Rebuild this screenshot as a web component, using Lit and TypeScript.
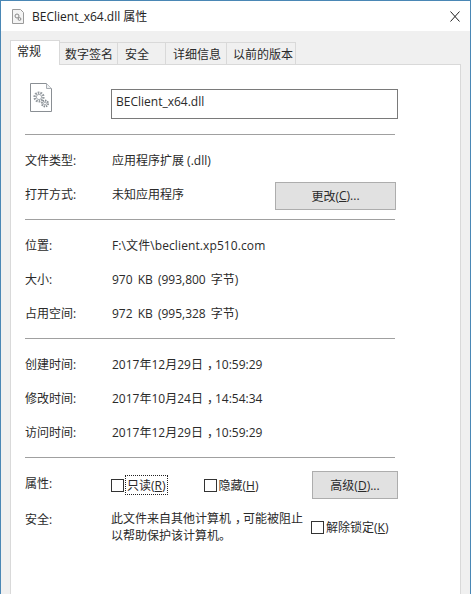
import { LitElement, html, css } from 'lit';
import { customElement } from 'lit/decorators.js';

const TABS = [
  { label: '常规', width: 50, pad: 6 },
  { label: '数字签名', width: 59, pad: 5 },
  { label: '安全', width: 49, pad: 7 },
  { label: '详细信息', width: 62, pad: 7 },
  { label: '以前的版本', width: 70, pad: 6 },
];

@customElement('app-root')
export class AppRoot extends LitElement {
  static styles = css`
    :host {
      display: block;
      width: 471px;
      height: 594px;
      overflow: hidden;
      font-family: 'Open Sans', 'Noto Sans CJK SC', sans-serif;
      font-size: 12px;
      color: #2a2a2a;
    }

    .window {
      display: flex;
      flex-direction: column;
      box-sizing: border-box;
      height: 594px;
      border: 1px solid #4a87b5;
      border-bottom: none;
      background: #f0f0f0;
    }

    .titlebar {
      display: flex;
      align-items: center;
      flex: none;
      height: 30px;
      padding: 0 10px 0 11px;
      background: #fff;
    }

    .titlebar .title {
      flex: 1;
      margin-left: 8px;
      color: #222;
    }

    .tabs {
      display: flex;
      align-items: flex-end;
      flex: none;
      height: 33px;
      padding-left: 9px;
    }

    .tab {
      display: flex;
      align-items: center;
      box-sizing: border-box;
      height: 22px;
      margin-left: -1px;
      border: 1px solid #d9d9d9;
      border-bottom: none;
      background: #f0f0f0;
    }

    .tab.active {
      height: 25px;
      margin-left: 0;
      padding-bottom: 4px;
      margin-bottom: -1px;
      background: #fff;
      position: relative;
      z-index: 1;
    }

    .panel {
      flex: 1;
      box-sizing: border-box;
      width: 451px;
      margin-left: 9px;
      padding: 18px 62px 0 14px;
      border: 1px solid #d9d9d9;
      border-bottom: none;
      background: #fff;
    }

    .head {
      display: flex;
      align-items: flex-start;
      height: 35px;
    }

    .file-icon {
      margin-left: 5px;
      width: 22px;
      height: 29px;
    }

    .name {
      box-sizing: border-box;
      width: 287px;
      height: 30px;
      margin: 6px 0 0 59px;
      padding: 0 0 5px 4px;
      display: flex;
      align-items: center;
      border: 1px solid #7a7a7a;
    }

    .sep {
      width: 370px;
      height: 1px;
      background: #a0a0a0;
    }

    .group {
      padding: 8px 0;
    }

    .head + .sep {
      margin-top: 16px;
    }

    .row {
      display: flex;
      align-items: center;
      height: 34px;
    }

    .label {
      flex: none;
      width: 87px;
    }

    .value {
      flex: 1;
    }

    .path {
      letter-spacing: 0.1px;
    }

    .size {
      word-spacing: 2px;
    }

    .comma {
      padding-left: 4px;
      letter-spacing: -4px;
    }

    .btn {
      display: flex;
      align-items: center;
      justify-content: center;
      box-sizing: border-box;
      flex: none;
      height: 28px;
      border: 1px solid #adadad;
      background: #e1e1e1;
    }

    .btn u,
    .check u {
      text-underline-offset: 1px;
    }

    .btn-change {
      width: 121px;
      margin: 3px 2px 0 0;
    }

    .attrs {
      display: flex;
      align-items: center;
      height: 28px;
      margin-top: 13px;
    }

    .attrs .label {
      width: 86px;
      margin-top: -4px;
    }

    .check {
      display: flex;
      align-items: center;
      flex: none;
      gap: 2px;
    }

    .box {
      box-sizing: border-box;
      width: 13px;
      height: 13px;
      border: 1px solid #333;
      background: #fff;
    }

    .focus {
      padding: 0 1px;
      outline: 1px dotted #222;
      outline-offset: 0;
    }

    .check.hidden {
      margin-left: 37px;
    }

    .btn-advanced {
      width: 86px;
      margin-left: auto;
    }

    .security {
      display: flex;
      margin-top: 11px;
    }

    .security .label {
      width: 86px;
    }

    .note {
      flex: none;
      width: 200px;
      line-height: 17px;
    }

    .note div {
      white-space: nowrap;
    }

    .security .check {
      margin-top: 8px;
      align-self: flex-start;
    }
  `;

  private renderFileIcon() {
    return html`<svg class="file-icon" viewBox="0 0 22 29">
      <path d="M.5.5h16l5 5v23H.5z" fill="#fff" stroke="#8a8f94" />
      <path d="M16.5.5v5h5" fill="#eef0f2" stroke="#a8adb2" />
      <circle cx="9" cy="14" r="4.4" fill="none" stroke="#969ca1" stroke-width="2.4" stroke-dasharray="1.7 1" />
      <circle cx="9" cy="14" r="2.6" fill="none" stroke="#a9aeb3" />
      <circle cx="15" cy="20.5" r="3" fill="none" stroke="#868c91" stroke-width="2" stroke-dasharray="1.4 .9" />
      <circle cx="15" cy="20.5" r="1.4" fill="none" stroke="#a3a8ad" />
    </svg>`;
  }

  private renderRow(label: string, value: unknown) {
    return html`<div class="row">
      <div class="label">${label}</div>
      <div class="value">${value}</div>
    </div>`;
  }

  private renderDate(date: string, time: string) {
    return html`${date}<span class="comma">，</span>${time}`;
  }

  render() {
    return html`<div class="window">
      <div class="titlebar">
        <svg width="12" height="15" viewBox="0 0 12 15">
          <path d="M.5.5h8l3 3v11H.5z" fill="#f4f4f4" stroke="#9a9a9a" />
          <circle cx="5" cy="7" r="2" fill="none" stroke="#888" />
          <circle cx="7.5" cy="10" r="1.4" fill="none" stroke="#888" />
        </svg>
        <div class="title">BEClient_x64.dll 属性</div>
        <svg width="10" height="11" viewBox="0 0 10 11">
          <path d="M.5.5l9 10M9.5.5l-9 10" stroke="#222" fill="none" />
        </svg>
      </div>
      <div class="tabs">
        ${TABS.map(
          (t, i) => html`<div
            class="tab ${i === 0 ? 'active' : ''}"
            style="width: ${t.width}px; padding-left: ${t.pad}px"
          >
            ${t.label}
          </div>`
        )}
      </div>
      <div class="panel">
        <div class="head">
          ${this.renderFileIcon()}
          <div class="name">BEClient_x64.dll</div>
        </div>
        <div class="sep"></div>
        <div class="group">
          ${this.renderRow('文件类型:', '应用程序扩展 (.dll)')}
          <div class="row">
            <div class="label">打开方式:</div>
            <div class="value">未知应用程序</div>
            <div class="btn btn-change">更改(<u>C</u>)...</div>
          </div>
        </div>
        <div class="sep"></div>
        <div class="group">
          ${this.renderRow('位置:', html`<span class="path">F:\\文件\\beclient.xp510.com</span>`)}
          ${this.renderRow('大小:', html`<span class="size">970 KB (993,800 字节)</span>`)}
          ${this.renderRow('占用空间:', html`<span class="size">972 KB (995,328 字节)</span>`)}
        </div>
        <div class="sep"></div>
        <div class="group">
          ${this.renderRow('创建时间:', this.renderDate('2017年12月29日', '10:59:29'))}
          ${this.renderRow('修改时间:', this.renderDate('2017年10月24日', '14:54:34'))}
          ${this.renderRow('访问时间:', this.renderDate('2017年12月29日', '10:59:29'))}
        </div>
        <div class="sep"></div>
        <div class="attrs">
          <div class="label">属性:</div>
          <div class="check">
            <span class="box"></span><span class="focus">只读(<u>R</u>)</span>
          </div>
          <div class="check hidden">
            <span class="box"></span><span>隐藏(<u>H</u>)</span>
          </div>
          <div class="btn btn-advanced">高级(<u>D</u>)...</div>
        </div>
        <div class="security">
          <div class="label">安全:</div>
          <div class="note">
            <div>此文件来自其他计算机<span class="comma">，</span>可能被阻止</div>
            <div>以帮助保护该计算机。</div>
          </div>
          <div class="check">
            <span class="box"></span><span>解除锁定(<u>K</u>)</span>
          </div>
        </div>
      </div>
    </div>`;
  }
}
